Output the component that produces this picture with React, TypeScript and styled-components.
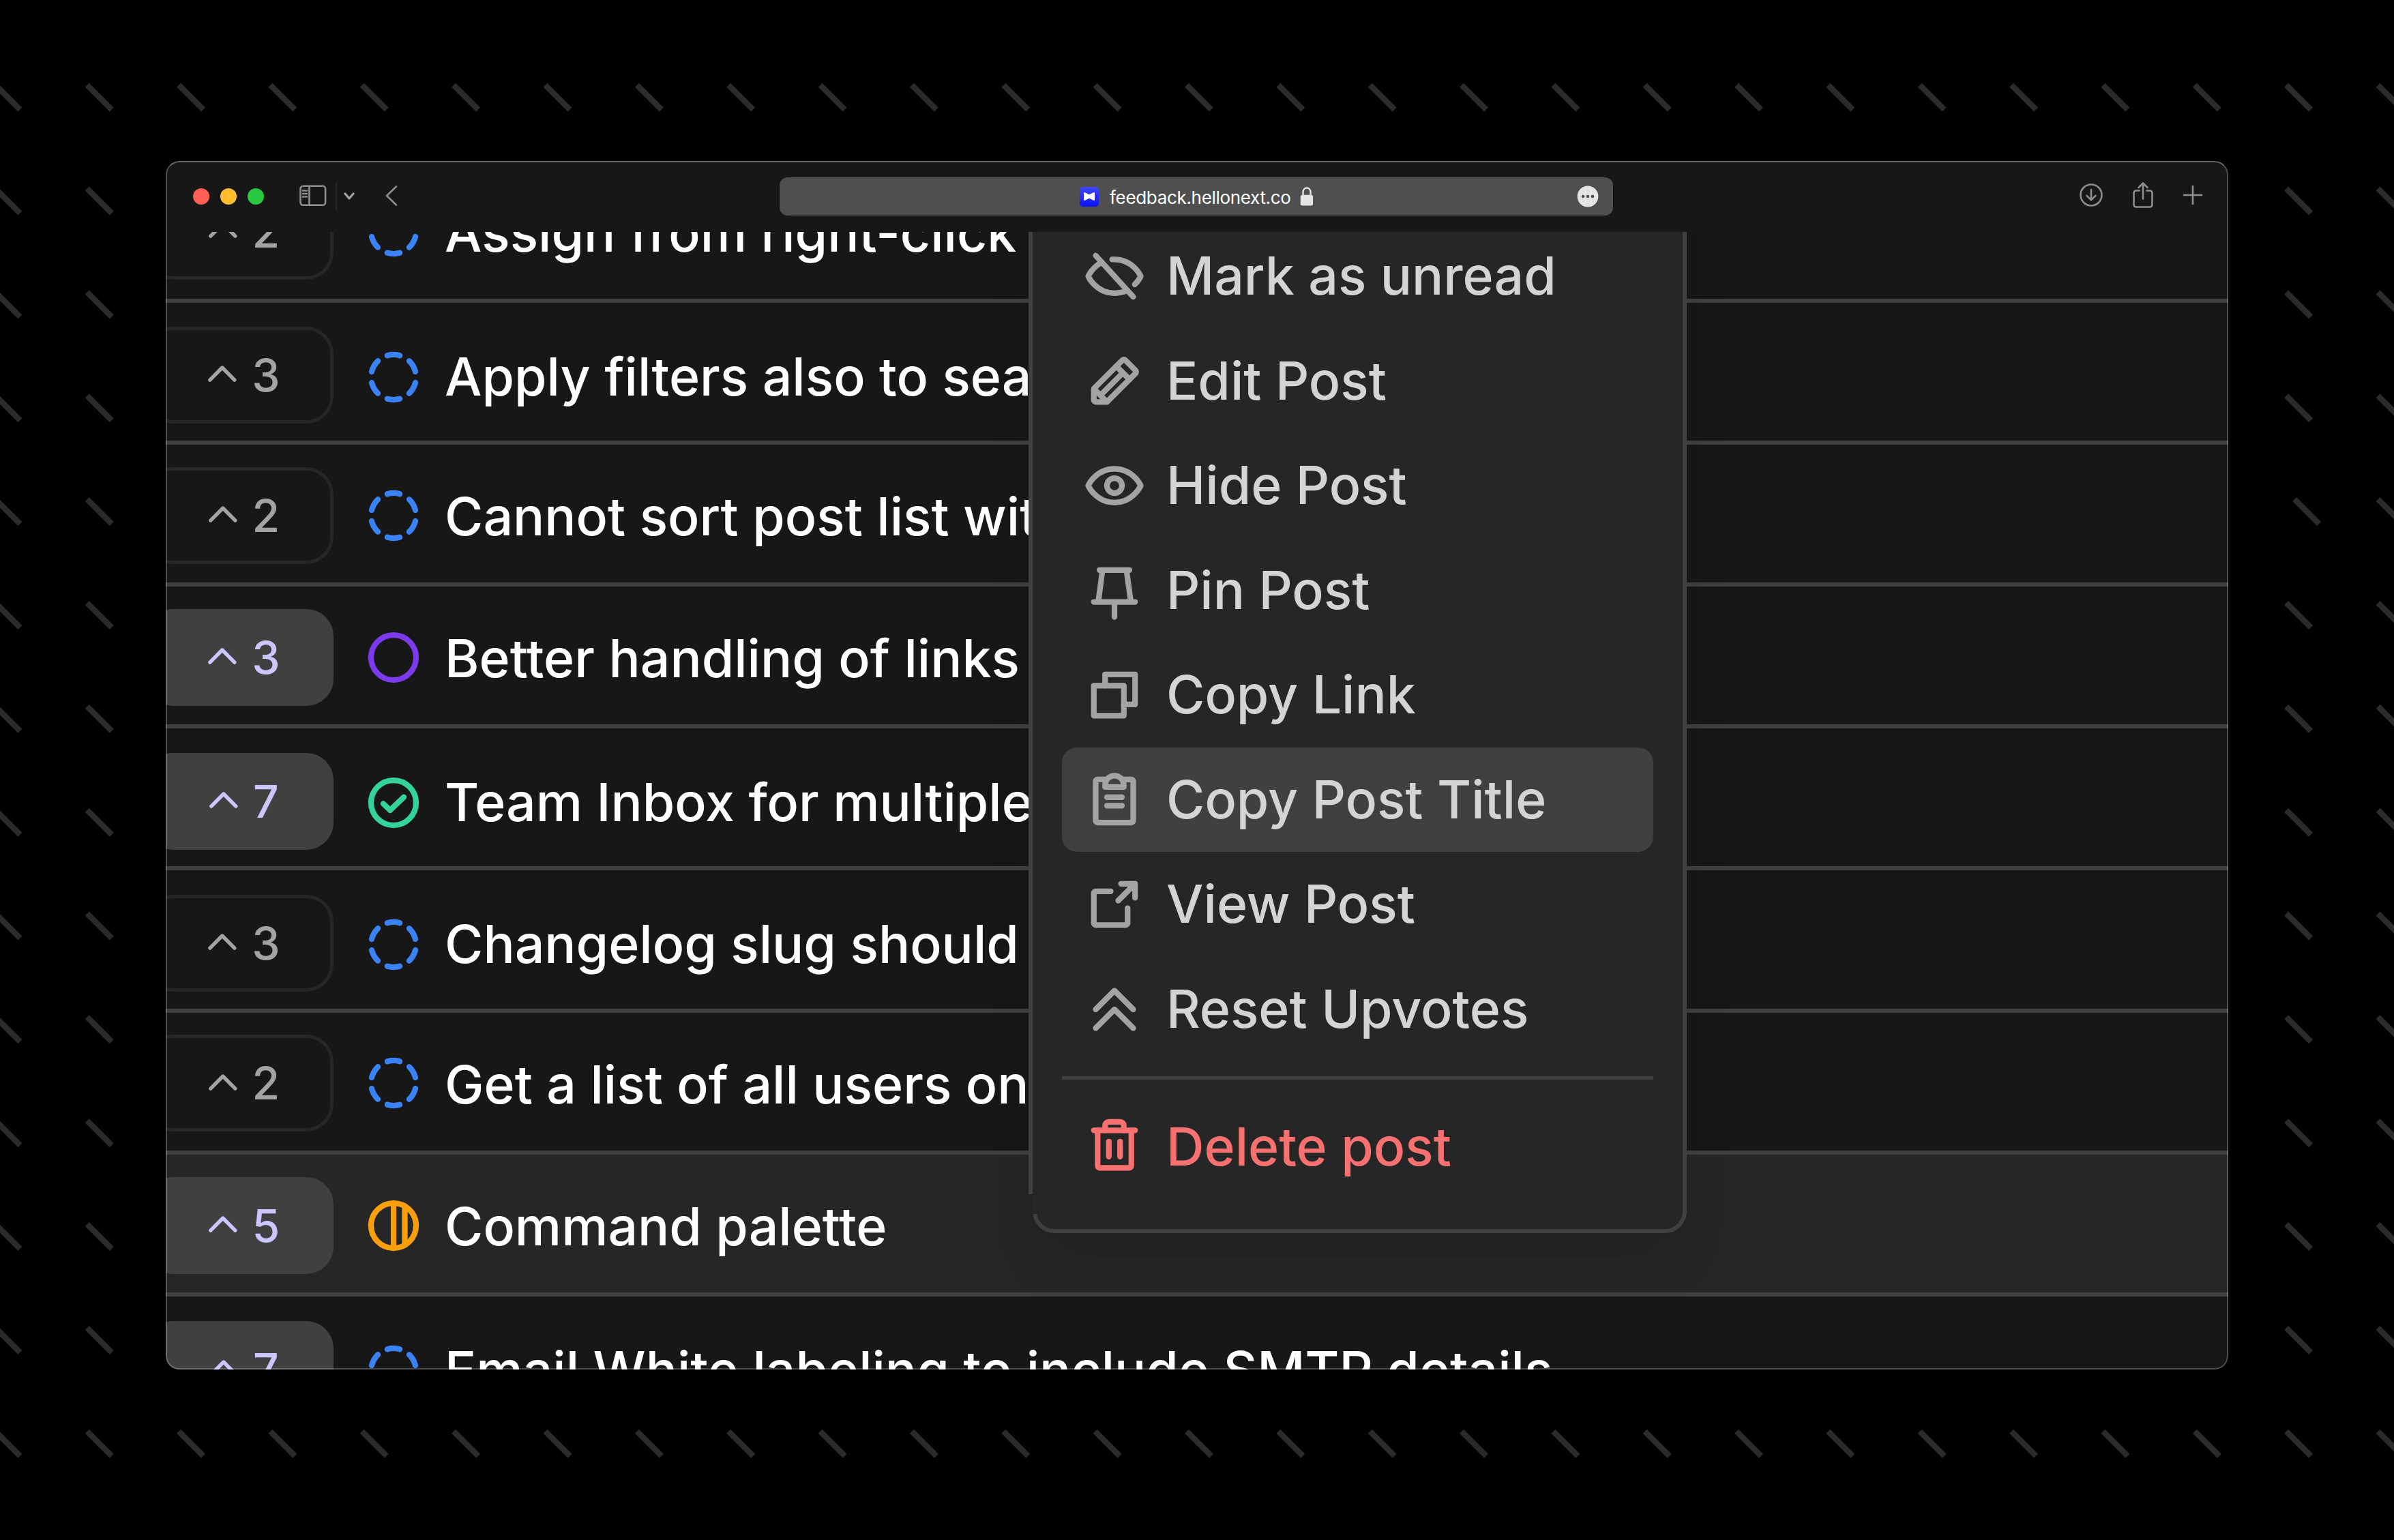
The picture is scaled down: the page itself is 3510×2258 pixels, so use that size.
import React from 'react';
import styled, { createGlobalStyle, css } from 'styled-components';

type Status = 'open' | 'planned' | 'progress' | 'done';

interface Post {
  title: string;
  votes: number;
  status: Status;
  voted?: boolean;
  active?: boolean;
  lowered?: boolean;
}

interface MenuEntry {
  label: string;
  icon: keyof typeof menuIcons;
  active?: boolean;
}

const posts: Post[] = [
  { title: 'Assign from right-click', votes: 2, status: 'open' },
  { title: 'Apply filters also to search', votes: 3, status: 'open', lowered: true },
  { title: 'Cannot sort post list with', votes: 2, status: 'open' },
  { title: 'Better handling of links', votes: 3, status: 'planned', voted: true },
  { title: 'Team Inbox for multiple', votes: 7, status: 'done', voted: true, lowered: true },
  { title: 'Changelog slug should', votes: 3, status: 'open', lowered: true },
  { title: 'Get a list of all users on', votes: 2, status: 'open' },
  { title: 'Command palette', votes: 5, status: 'progress', voted: true, active: true },
  {
    title: 'Email White labeling to include SMTP details',
    votes: 7,
    status: 'open',
    voted: true,
    lowered: true,
  },
];

const menuIcons = {
  eyeSlash: (
    <>
      <path d="M48 40 208 216" />
      <path d="M74 68.6C33.1 89.2 16 128 16 128s32 72 112 72a126 126 0 0 0 54-11.4" />
      <path d="M118 56.5Q123 56 128 56c80 0 112 72 112 72s-8 18-25.5 35" />
    </>
  ),
  pencil: (
    <>
      <path d="M96 216H48a8 8 0 0 1-8-8v-44.7a7.9 7.9 0 0 1 2.3-5.6l120-120a8 8 0 0 1 11.4 0l44.6 44.6a8 8 0 0 1 0 11.4Z" />
      <path d="M136 64l56 56M164 92l-96 96M95.5 215.5l-55-55" />
    </>
  ),
  eye: (
    <>
      <path d="M128 56C48 56 16 128 16 128s32 72 112 72 112-72 112-72-32-72-112-72Z" />
      <circle cx="128" cy="128" r="32" />
    </>
  ),
  pin: <path d="M128 176v64M64 40h128M40 176h176M77 40 59 176M179 40l19 136" />,
  copy: (
    <>
      <path d="M168 168h48V40H88v48" />
      <rect x="40" y="88" width="128" height="128" />
    </>
  ),
  clipboard: (
    <>
      <path d="M96 152h64M96 116h64" />
      <path d="M168 40h32a8 8 0 0 1 8 8v168a8 8 0 0 1-8 8H56a8 8 0 0 1-8-8V48a8 8 0 0 1 8-8h32" />
      <path d="M88 72v-8a40 40 0 0 1 80 0v8Z" />
    </>
  ),
  external: (
    <>
      <path d="M216 100V40h-60M144 112l72-72" />
      <path d="M184 144v64a8 8 0 0 1-8 8H48a8 8 0 0 1-8-8V80a8 8 0 0 1 8-8h64" />
    </>
  ),
  doubleUp: <path d="m48 128 80-80 80 80M48 208l80-80 80 80" />,
  trash: (
    <>
      <path d="M216 56H40M104 104v64M152 104v64" />
      <path d="M200 56v152a8 8 0 0 1-8 8H64a8 8 0 0 1-8-8V56" />
      <path d="M168 56V36a16 16 0 0 0-16-16h-48a16 16 0 0 0-16 16v20" />
    </>
  ),
};

const menuEntries: MenuEntry[] = [
  { label: 'Mark as unread', icon: 'eyeSlash' },
  { label: 'Edit Post', icon: 'pencil' },
  { label: 'Hide Post', icon: 'eye' },
  { label: 'Pin Post', icon: 'pin' },
  { label: 'Copy Link', icon: 'copy' },
  { label: 'Copy Post Title', icon: 'clipboard', active: true },
  { label: 'View Post', icon: 'external' },
  { label: 'Reset Upvotes', icon: 'doubleUp' },
];

const statusColors: Record<Status, string> = {
  open: '#3b82f6',
  planned: '#7c3aed',
  progress: '#f99f0b',
  done: '#34d399',
};

const StatusIcon: React.FC<{ status: Status }> = ({ status }) => (
  <StatusGlyph viewBox="0 0 256 256" color={statusColors[status]}>
    {status === 'open' ? (
      <circle
        cx="128"
        cy="128"
        r="96"
        pathLength={360}
        strokeDasharray="32 28"
        transform="rotate(-106 128 128)"
      />
    ) : (
      <circle cx="128" cy="128" r="96" />
    )}
    {status === 'done' && <path d="m172 104-58.7 56L84 132" />}
    {status === 'progress' && <path d="M128 32v192M176 45v166" />}
  </StatusGlyph>
);

const dashColumns = Array.from({ length: 27 }, (_, i) => 11.4 + i * 134.35);
const dashRows = Array.from({ length: 14 }, (_, i) => 142.7 + i * 151.85);

const Backdrop: React.FC = () => (
  <BackdropSvg viewBox="0 0 3510 2258">
    {dashRows.map((y, row) =>
      dashColumns.map((x, column) => {
        // one dash sits slightly off the grid
        const cx = row === 4 && column === 25 ? x + 12 : x;
        return <path key={`${row}-${column}`} d={`M${cx - 18} ${y - 18}l36 36`} />;
      }),
    )}
  </BackdropSvg>
);

const Toolbar: React.FC = () => (
  <ToolbarBar>
    <ToolbarSide>
      <TrafficLights>
        <Light $color="#ff5f57" />
        <Light $color="#febc2e" />
        <Light $color="#28c840" />
      </TrafficLights>
      <SidebarToggle width="40" height="32" viewBox="0 0 40 32">
        <rect x="1.5" y="1.8" width="36.6" height="28" rx="4" />
        <path d="M14.5 2v28M5 8.5h6M5 13h6M5 17.5h6" />
      </SidebarToggle>
      <ToolbarDivider />
      <MenuChevron width="16" height="12" viewBox="0 0 16 12">
        <path d="m2 2 6 7 6-7" />
      </MenuChevron>
      <BackChevron width="20" height="32" viewBox="0 0 20 32">
        <path d="M17 2.5 3 16l14 13.5" />
      </BackChevron>
    </ToolbarSide>
    <AddressBar>
      <Address>
        <Favicon width="30" height="30" viewBox="0 0 30 30">
          <defs>
            <linearGradient id="favicon" x1="0" y1="0" x2="0" y2="1">
              <stop offset="0" stopColor="#4048ff" />
              <stop offset="1" stopColor="#0c10ff" />
            </linearGradient>
          </defs>
          <rect x="1" y="1" width="28" height="29" rx="5" fill="url(#favicon)" />
          <path
            d="M7 10.5q0-2 1.8-1.2L15 12.2l6.2-2.9Q23 8.500 23 10.500v9q0 2-1.8 1.2L15 17.8l-6.2 2.9Q7 21.500 7 19.500Z"
            fill="#fff"
          />
        </Favicon>
        <AddressText>feedback.hellonext.co</AddressText>
        <svg width="20" height="28" viewBox="0 0 20 28">
          <path d="M4.5 13V7.500a5.500 6 0 0 1 11 0V13" fill="none" stroke="#e4e4e4" strokeWidth="2.4" />
          <rect x="0.7" y="11.8" width="18.4" height="15.6" rx="3" fill="#e4e4e4" />
        </svg>
      </Address>
      <MoreBadge width="32" height="32" viewBox="0 0 32 32">
        <circle cx="16" cy="16" r="15.4" fill="#e4e4e4" />
        <circle cx="9" cy="16" r="2.3" fill="#4f4f4f" />
        <circle cx="16" cy="16" r="2.3" fill="#4f4f4f" />
        <circle cx="23" cy="16" r="2.3" fill="#4f4f4f" />
      </MoreBadge>
    </AddressBar>
    <ToolbarActions>
      <ActionIcon width="36" height="36" viewBox="0 0 36 36">
        <circle cx="18" cy="18" r="15.5" />
        <path d="M18 10v15M11.5 18.8 18 25.3l6.5-6.5" />
      </ActionIcon>
      <ActionIcon width="32" height="40" viewBox="0 0 32 40">
        <path d="M10.5 13.5H6A3.5 3.5 0 0 0 2.5 17v17A3.5 3.5 0 0 0 6 37.5h20a3.5 3.5 0 0 0 3.5-3.5V17a3.5 3.5 0 0 0-3.5-3.5h-4.5" />
        <path d="M16 25.5V3M9.5 9 16 2.5 22.5 9" />
      </ActionIcon>
      <ActionIcon width="28" height="28" viewBox="0 0 28 28">
        <path d="M14 .5v27M.5 14h27" />
      </ActionIcon>
    </ToolbarActions>
  </ToolbarBar>
);

const PostRow: React.FC<{ post: Post }> = ({ post }) => (
  <Row $active={post.active} $lowered={post.lowered}>
    <VoteButton $voted={post.voted}>
      <VoteCaret viewBox="0 0 256 256">
        <path d="m48 160 80-80 80 80" />
      </VoteCaret>
      {post.votes}
    </VoteButton>
    <StatusSlot $lowered={post.lowered}>
      <StatusIcon status={post.status} />
    </StatusSlot>
    <Title>{post.title}</Title>
  </Row>
);

const ContextMenu: React.FC = () => (
  <Menu>
    {menuEntries.map(({ label, icon, active }) => (
      <MenuItem key={label} $active={active}>
        <MenuGlyph viewBox="0 0 256 256">{menuIcons[icon]}</MenuGlyph>
        {label}
      </MenuItem>
    ))}
    <MenuSeparator />
    <MenuItem $danger>
      <MenuGlyph viewBox="0 0 256 256">{menuIcons.trash}</MenuGlyph>
      Delete post
    </MenuItem>
  </Menu>
);

const App: React.FC = () => (
  <Page>
    <GlobalStyle />
    <Backdrop />
    <Window>
      <Toolbar />
      <Viewport>
        <PostList>
          {posts.map(post => (
            <PostRow key={post.title} post={post} />
          ))}
        </PostList>
        <ContextMenu />
      </Viewport>
    </Window>
  </Page>
);

export default App;

const GlobalStyle = createGlobalStyle`
  body {
    margin: 0;
    background: #000;
    font-family: Inter, 'Liberation Sans', sans-serif;
    -webkit-font-smoothing: antialiased;
  }
  * {
    box-sizing: border-box;
  }
  svg {
    display: block;
    flex-shrink: 0;
  }
`;

const Page = styled.div`
  position: relative;
  width: 3510px;
  height: 2258px;
  padding: 236px 243px 0;
  overflow: hidden;
  background: #000;
`;

const BackdropSvg = styled.svg`
  position: absolute;
  inset: 0;
  width: 3510px;
  height: 2258px;
  stroke: #2b2b2b;
  stroke-width: 8.5;
`;

const Window = styled.div`
  position: relative;
  display: flex;
  flex-direction: column;
  width: 3024px;
  height: 1772px;
  border-radius: 20px;
  overflow: hidden;
  background: #171717;

  /* hairline drawn over the content */
  &::after {
    content: '';
    position: absolute;
    inset: 0;
    border: 2px solid rgba(255, 255, 255, 0.24);
    border-top-color: rgba(255, 255, 255, 0.36);
    border-radius: 20px;
    pointer-events: none;
  }
`;

const ToolbarBar = styled.div`
  display: grid;
  grid-template-columns: 900px 1222px 902px;
  align-items: start;
  height: 104px;
  flex-shrink: 0;
`;

const ToolbarSide = styled.div`
  display: flex;
  align-items: center;
  height: 104px;
  padding-left: 40px;
`;

const TrafficLights = styled.div`
  display: flex;
  gap: 16px;
`;

const Light = styled.span<{ $color: string }>`
  width: 24px;
  height: 24px;
  border-radius: 50%;
  background: ${props => props.$color};
`;

const toolbarStroke = css`
  fill: none;
  stroke: #8e8e8e;
  stroke-width: 2.6;
  stroke-linecap: round;
  stroke-linejoin: round;
`;

const SidebarToggle = styled.svg`
  ${toolbarStroke};
  margin: 0 13px 2px 52px;
`;

const ToolbarDivider = styled.span`
  width: 2px;
  height: 38px;
  background: #262626;
`;

const MenuChevron = styled.svg`
  ${toolbarStroke};
  stroke: #a3a3a3;
  stroke-width: 3.2;
  margin: 0 44px 0 10px;
`;

const BackChevron = styled.svg`
  ${toolbarStroke};
  margin-bottom: 2px;
`;

const AddressBar = styled.div`
  display: flex;
  align-items: center;
  height: 56px;
  margin-top: 24px;
  padding-right: 21px;
  border-radius: 12px;
  background: #4f4f4f;
`;

const Address = styled.div`
  display: flex;
  align-items: center;
  flex: 1;
  padding-left: 439px;
`;

const Favicon = styled.svg`
  margin-right: 15px;
`;

const AddressText = styled.span`
  width: 279px;
  color: #fff;
  font-size: 26px;
  font-weight: 400;
  line-height: 36px;
  letter-spacing: -0.32px;
  margin-top: 3px;
`;

const MoreBadge = styled.svg``;

const ToolbarActions = styled.div`
  display: flex;
  align-items: center;
  justify-content: flex-end;
  height: 100px;
  padding-right: 38px;
`;

const ActionIcon = styled.svg`
  ${toolbarStroke};

  & + & {
    margin-left: 42px;
  }
  & + & + & {
    margin-left: 43px;
  }
`;

const Viewport = styled.div`
  position: relative;
  flex: 1;
  min-height: 0;
  overflow: hidden;
`;

const PostList = styled.div`
  display: flex;
  flex-direction: column;
  margin-top: -104.6px;
`;

const Row = styled.div<{ $active?: boolean; $lowered?: boolean }>`
  display: flex;
  align-items: center;
  flex-shrink: 0;
  height: 208.2px;
  padding-top: ${props => (props.$lowered ? 11 : 5.6)}px;
  border-bottom: 6px solid #404040;
  background: ${props => (props.$active ? '#262626' : 'transparent')};
`;

const VoteButton = styled.div<{ $voted?: boolean }>`
  display: flex;
  align-items: center;
  justify-content: center;
  gap: 14px;
  flex-shrink: 0;
  width: 275px;
  height: 142px;
  margin-left: -29px;
  padding-left: 5px;
  border: 5px solid ${props => (props.$voted ? '#404040' : '#262626')};
  border-radius: 40px;
  background: ${props => (props.$voted ? '#404040' : 'transparent')};
  color: ${props => (props.$voted ? '#cbc6fd' : '#a3a3a3')};
  font-size: 66px;
  font-weight: 500;
  line-height: 1;
`;

const VoteCaret = styled.svg`
  width: 57.7px;
  height: 57.7px;
  fill: none;
  stroke: currentColor;
  stroke-width: 24;
  stroke-linecap: round;
  stroke-linejoin: round;
`;

const StatusSlot = styled.div<{ $lowered?: boolean }>`
  margin: ${props => (props.$lowered ? 5 : 0)}px 31px 0 44px;
`;

const StatusGlyph = styled.svg`
  width: 88px;
  height: 88px;
  fill: none;
  stroke: currentColor;
  stroke-width: 24;
  stroke-linecap: round;
  stroke-linejoin: round;
`;

const Title = styled.div`
  padding-top: 5px;
  color: #fff;
  font-size: 76.9px;
  font-weight: 500;
  line-height: 104px;
  white-space: nowrap;
`;

const Menu = styled.div`
  position: absolute;
  right: 794px;
  bottom: 200px;
  width: 959px;
  padding: 43px 43px 43.5px 37px;
  border: 6px solid #404040;
  border-radius: 32px;
  background: #262626;
  box-shadow: 0 57px 85px -17px rgba(0, 0, 0, 0.1), 0 23px 34px -11px rgba(0, 0, 0, 0.05);

  /* the left edge stands just outside the rounded corner */
  &::before {
    content: '';
    position: absolute;
    left: -6px;
    top: 0;
    bottom: 22px;
    width: 6px;
    background: #262626;
  }
  &::after {
    content: '';
    position: absolute;
    left: -12px;
    top: 0;
    bottom: 51px;
    width: 6px;
    background: #404040;
  }
`;

const MenuItem = styled.div<{ $active?: boolean; $danger?: boolean }>`
  display: flex;
  align-items: center;
  gap: 32px;
  height: 153.5px;
  padding: 1px 0 0 33px;
  border-radius: 22px;
  background: ${props => (props.$active ? '#404040' : 'transparent')};
  color: ${props => (props.$danger ? '#f87171' : '#d4d4d4')};
  font-size: 76.9px;
  font-weight: 500;
  line-height: 104px;
  white-space: nowrap;

  svg {
    color: ${props => (props.$danger ? '#f87171' : '#a3a3a3')};
  }
`;

const MenuGlyph = styled.svg`
  width: 88px;
  height: 88px;
  fill: none;
  stroke: currentColor;
  stroke-width: 24;
  stroke-linecap: round;
  stroke-linejoin: round;
`;

const MenuSeparator = styled.div`
  height: 5px;
  margin: 22px 0;
  background: #404040;
`;
